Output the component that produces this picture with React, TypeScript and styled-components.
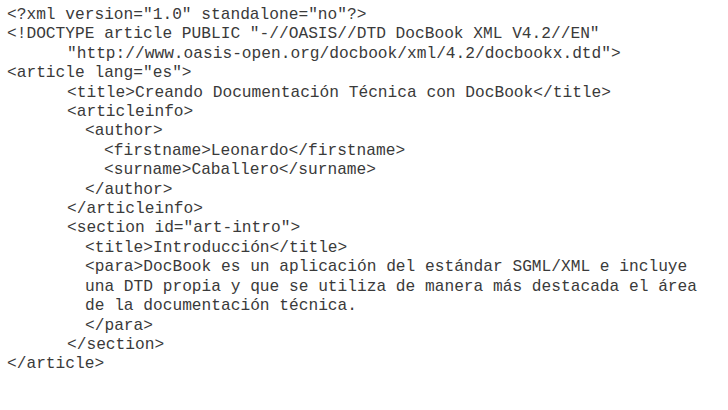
import styled, { createGlobalStyle } from "styled-components";

const GlobalStyle = createGlobalStyle`
  html, body {
    margin: 0;
    padding: 0;
    background: #ffffff;
  }
`;

const Page = styled.main`
  width: 728px;
  height: 410px;
  background: #ffffff;
  box-sizing: border-box;
  padding: 6px 0 0 7px;
  overflow: hidden;
`;

const Listing = styled.div`
  display: flex;
  flex-direction: column;
  font-family: "Liberation Mono", "Courier New", monospace;
  font-size: 16.2px;
  line-height: 19.4px;
  color: #3a3a3a;
`;

const Line = styled.div<{ indent: number }>`
  white-space: pre;
  padding-left: ${({ indent }) => indent}px;
`;

const lines: [number, string][] = [
  [0, `<?xml version="1.0" standalone="no"?>`],
  [0, `<!DOCTYPE article PUBLIC "-//OASIS//DTD DocBook XML V4.2//EN"`],
  [60, `"http://www.oasis-open.org/docbook/xml/4.2/docbookx.dtd">`],
  [0, `<article lang="es">`],
  [60, `<title>Creando Documentación Técnica con DocBook</title>`],
  [60, `<articleinfo>`],
  [78, `<author>`],
  [97, `<firstname>Leonardo</firstname>`],
  [97, `<surname>Caballero</surname>`],
  [78, `</author>`],
  [60, `</articleinfo>`],
  [60, `<section id="art-intro">`],
  [78, `<title>Introducción</title>`],
  [78, `<para>DocBook es un aplicación del estándar SGML/XML e incluye`],
  [78, `una DTD propia y que se utiliza de manera más destacada el área`],
  [78, `de la documentación técnica.`],
  [78, `</para>`],
  [60, `</section>`],
  [0, `</article>`],
];

export default function App() {
  return (
    <>
      <GlobalStyle />
      <Page>
        <Listing>
          {lines.map(([indent, text], i) => (
            <Line key={i} indent={indent}>
              {text}
            </Line>
          ))}
        </Listing>
      </Page>
    </>
  );
}
